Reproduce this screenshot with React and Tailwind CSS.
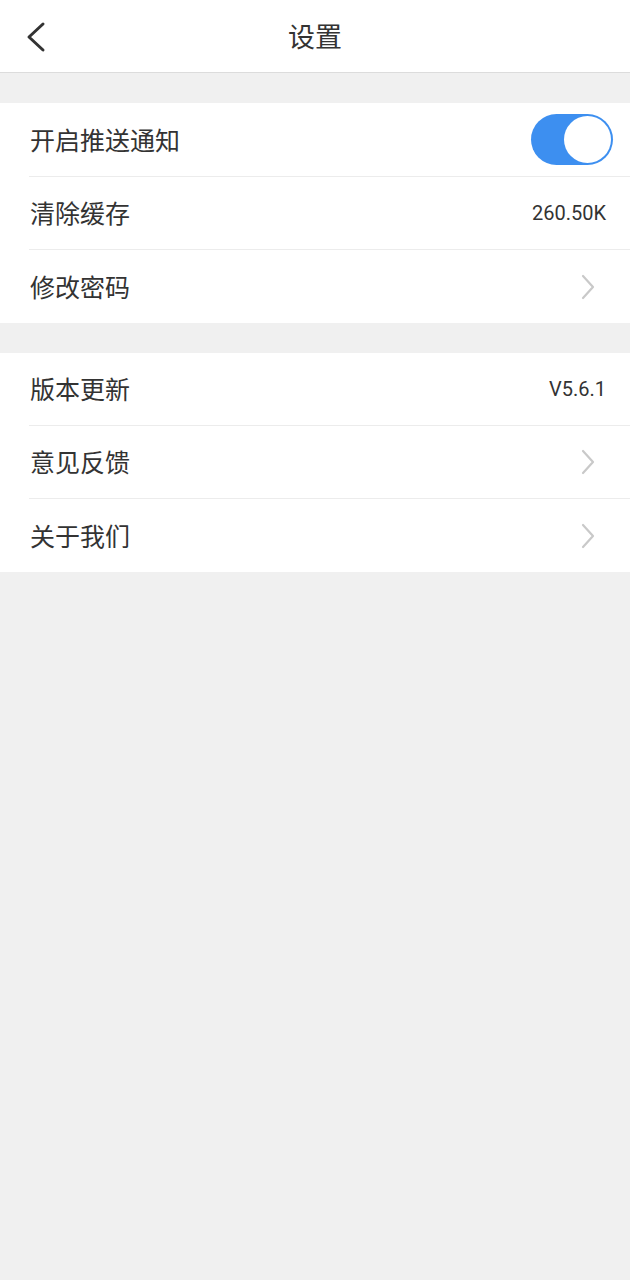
import { Fragment } from 'react';

const font = { fontFamily: '"Noto Sans CJK SC", "Noto Sans", sans-serif' };

function Chevron() {
  return (
    <svg width="16" height="26" viewBox="0 0 16 26" className="shrink-0">
      <path d="M3 2 L13 13 L3 24" fill="none" stroke="#c9c9c9" strokeWidth="2.2" strokeLinecap="round" strokeLinejoin="round" />
    </svg>
  );
}

function Toggle() {
  return (
    <div className="w-[82px] h-[51px] rounded-full bg-[#3d8ff0] flex items-center justify-end p-[2px]">
      <div className="w-[47px] h-[47px] rounded-full bg-white"></div>
    </div>
  );
}

function Row({ label, right, last, tall }) {
  return (
    <div className="pl-[29px]">
      <div className={`${tall ? 'h-[74px]' : 'h-[73px]'} flex items-center justify-between pr-[24px] ${last ? '' : 'border-b border-[#ececec]'}`}>
        <span className="text-[25px] text-[#333333] pl-px">{label}</span>
        {right}
      </div>
    </div>
  );
}

function Value({ children }) {
  return <span className="text-[20px] text-[#333333]" style={{ fontFamily: 'Roboto, "Noto Sans", sans-serif' }}>{children}</span>;
}

export default function App() {
  const groups = [
    [
      { label: '开启推送通知', right: <span className="-mr-[7px]"><Toggle /></span> },
      { label: '清除缓存', right: <Value>260.50K</Value> },
      { label: '修改密码', right: <span className="mr-[10px]"><Chevron /></span> },
    ],
    [
      { label: '版本更新', right: <Value>V5.6.1</Value> },
      { label: '意见反馈', right: <span className="mr-[10px]"><Chevron /></span> },
      { label: '关于我们', right: <span className="mr-[10px]"><Chevron /></span> },
    ],
  ];

  return (
    <div className="min-h-screen bg-[#f0f0f0]" style={font}>
      {/* Top bar */}
      <header className="h-[73px] bg-white border-b border-[#dcdcdc] relative flex items-center justify-center">
        <svg width="24" height="34" viewBox="0 0 24 34" className="absolute left-[24px] top-[20px]">
          <path d="M19 4 L5 17 L19 30" fill="none" stroke="#333333" strokeWidth="3" strokeLinecap="round" strokeLinejoin="round" />
        </svg>
        <h1 className="text-[27px] text-[#333333]">设置</h1>
      </header>

      {groups.map((group, gi) => (
        <Fragment key={gi}>
          <div className="h-[30px]"></div>
          <div className="bg-white">
            {group.map((item, i) => (
              <Row
                key={item.label}
                label={item.label}
                right={item.right}
                tall={gi === 0 && i === 0}
                last={i === group.length - 1}
              />
            ))}
          </div>
        </Fragment>
      ))}
    </div>
  );
}
